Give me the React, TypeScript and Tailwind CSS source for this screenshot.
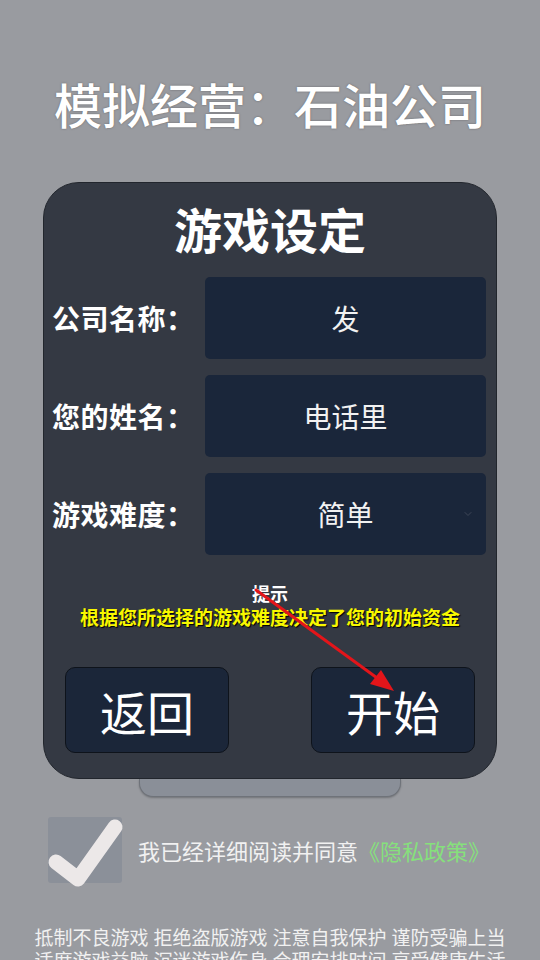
import { ChevronDown } from "lucide-react";

const font = { fontFamily: '"Noto Sans CJK SC", "Noto Sans", sans-serif' };

const Field = ({ label, value, select }: { label: string; value: string; select?: boolean }) => (
  <div className="flex items-center">
    <div className="w-[161px] pl-[8px] text-[28px] font-bold leading-none tracking-[0.5px] text-white">{label}</div>
    <div className="relative flex h-[82px] w-[281px] items-center justify-center rounded-[5px] bg-[#1a263a] text-[28px] leading-none text-[#f2f2f2]">
      {value}
      {select && <ChevronDown className="absolute right-[12px] h-[12px] w-[12px] text-[#3e4657]" strokeWidth={2} />}
    </div>
  </div>
);

const notice = [
  ["抵制不良游戏", "拒绝盗版游戏", "注意自我保护", "谨防受骗上当"],
  ["适度游戏益脑", "沉迷游戏伤身", "合理安排时间", "享受健康生活"],
];

export default function App() {
  return (
    <div className="relative flex h-[960px] w-full flex-col items-center overflow-hidden bg-[#999ba0]" style={font}>
      <h1 className="mt-[79px] text-[48px] font-medium leading-none text-white [text-shadow:0_0_2px_rgba(60,60,60,0.6)]">
        模拟经营：石油公司
      </h1>

      {/* settings card */}
      <div className="relative mt-[55px] w-[454px] rounded-[36px] border border-[#22262d] bg-[#343943] pb-[25px] pt-[21px]">
        <h2 className="text-center text-[48px] font-bold leading-none text-white">游戏设定</h2>
        <div className="mt-[25px] flex flex-col gap-[16px]">
          <Field label="公司名称：" value="发" />
          <Field label="您的姓名：" value="电话里" />
          <Field label="游戏难度：" value="简单" select />
        </div>
        <div className="mt-[29px] text-center text-[18px] font-bold leading-none text-white">提示</div>
        <div className="mt-[5px] text-center text-[19px] font-bold leading-none text-[#f8f800] [text-shadow:1px_1px_1px_#000]">
          根据您所选择的游戏难度决定了您的初始资金
        </div>
        <div className="mt-[41px] flex justify-between px-[21px]">
          <button className="flex h-[86px] w-[164px] items-center justify-center rounded-[10px] border border-[#0e131b] bg-[#1b2639] text-[47px] leading-none text-white">
            返回
          </button>
          <button className="flex h-[86px] w-[164px] items-center justify-center rounded-[10px] border border-[#0e131b] bg-[#1b2639] text-[47px] leading-none text-white">
            开始
          </button>
        </div>
        {/* red pointer arrow */}
        <svg className="pointer-events-none absolute left-0 top-0" width="454" height="600" viewBox="0 0 454 600">
          <line x1="212" y1="407" x2="340" y2="500" stroke="#e3151a" strokeWidth="3" strokeLinecap="round" />
          <polygon points="350,508 326,501 337,487" fill="#e3151a" />
        </svg>
      </div>
      <div className="h-[18px] w-[262px] shrink-0 rounded-b-[14px] border border-t-0 border-[#6f737a] bg-[#8a8f98] shadow-[0_1px_2px_rgba(0,0,0,0.25)]" />

      {/* agreement */}
      <div className="mt-[20px] flex w-full shrink-0 items-center pl-[48px]">
        <div className="relative h-[66px] w-[74px] rounded-[3px] bg-[#8b9099]">
          <svg className="absolute left-0 top-0 overflow-visible" width="74" height="66" viewBox="0 0 74 66">
            <polyline points="8,45 30,62 67,10" fill="none" stroke="#ece8e8" strokeWidth="15" strokeLinecap="round" strokeLinejoin="round" />
          </svg>
        </div>
        <div className="ml-[16px] text-[22px] leading-none text-[#f1f1f1]">
          我已经详细阅读并同意<span className="text-[#86e07c]">《隐私政策》</span>
        </div>
      </div>

      <div className="mt-[42px] flex w-full shrink-0 flex-col items-center text-[19px] leading-[23px] text-[#f1f1f1]">
        {notice.map((line, i) => (
          <div key={i} className="flex gap-[5px] whitespace-nowrap">
            {line.map((w) => (
              <span key={w}>{w}</span>
            ))}
          </div>
        ))}
      </div>
    </div>
  );
}
